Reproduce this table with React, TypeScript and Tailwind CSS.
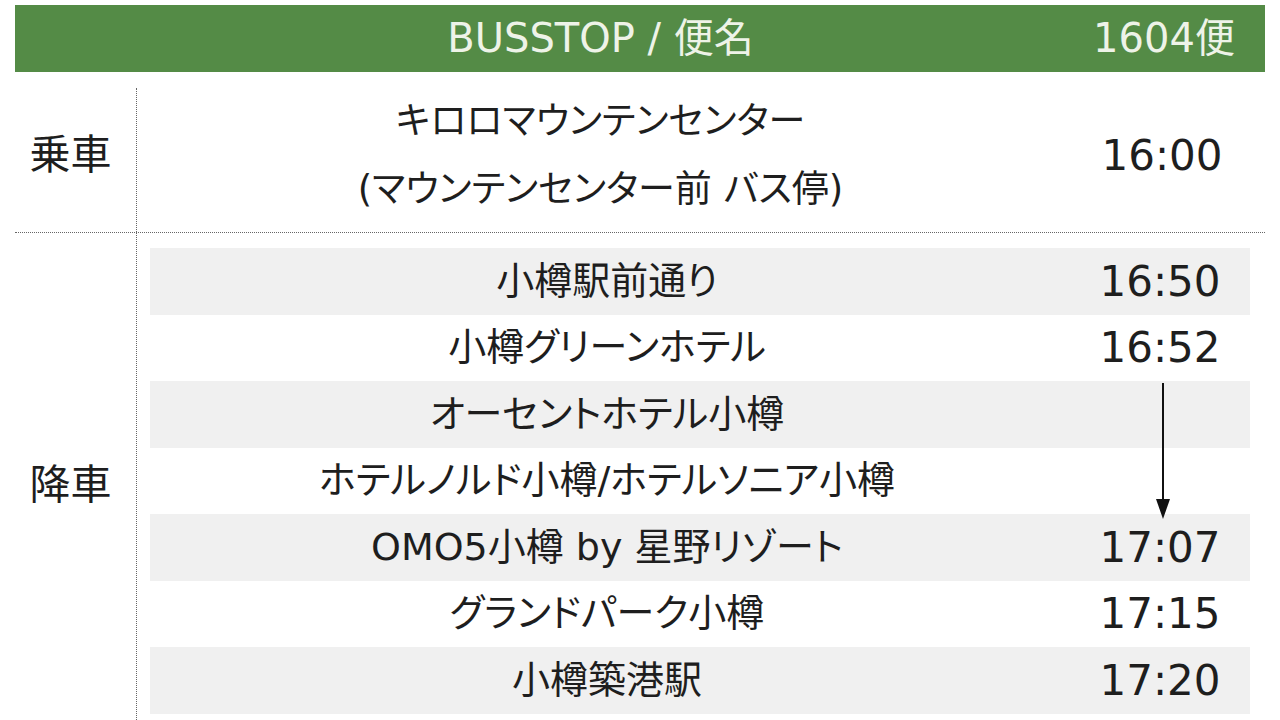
const font = "font-['DejaVu_Sans','Noto_Sans_CJK_JP',sans-serif]";

const dropoffs = [
  { name: '小樽駅前通り', time: '16:50' },
  { name: '小樽グリーンホテル', time: '16:52' },
  { name: 'オーセントホテル小樽', time: '' },
  { name: 'ホテルノルド小樽/ホテルソニア小樽', time: '' },
  { name: 'OMO5小樽 by 星野リゾート', time: '17:07' },
  { name: 'グランドパーク小樽', time: '17:15' },
  { name: '小樽築港駅', time: '17:20' },
];

const App = () => {
  return (
    <div className={`w-[1280px] h-[720px] overflow-hidden bg-white text-[#1e1e1e] ${font}`}>
      {/* Header */}
      <div className="mx-[15px] mt-[5px] h-[67px] bg-[#548b46] text-[#eef3e8] text-[40px] grid grid-cols-[122px_927px_186px] items-center">
        <div />
        <div className="text-center pb-[2px]">BUSSTOP / 便名</div>
        <div className="text-center pl-[14px] pb-[2px]">1604便</div>
      </div>

      {/* Boarding */}
      <div className="mx-[15px] mt-[16px] grid grid-cols-[122px_927px_186px] h-[144px]">
        <div className="border-r border-dotted border-[#666] flex items-center justify-center text-[41px] pr-[10px] pb-[10px]">
          乗車
        </div>
        <div className="flex flex-col items-center justify-center text-[37px] leading-[68px] pb-[10px] [font-feature-settings:'palt']">
          <div>キロロマウンテンセンター</div>
          <div>(マウンテンセンター前 バス停)</div>
        </div>
        <div className="flex items-center justify-center text-[42px] pb-[12px] pl-[10px]">16:00</div>
      </div>

      <div className="mx-[15px] border-t border-dotted border-[#666]" />

      {/* Alighting */}
      <div className="mx-[15px] grid grid-cols-[122px_1113px]">
        <div className="border-r border-dotted border-[#666] flex items-center justify-center text-[41px] pr-[10px] pt-[4px]">
          降車
        </div>
        <div className="pl-[13px] pt-[15px] pb-[20px] relative">
          {dropoffs.map((d, i) => (
            <div
              key={d.name}
              className={`h-[66.5px] grid grid-cols-[914px_186px] items-center ${i % 2 === 0 ? 'bg-[#f0f0f0]' : 'bg-white'}`}
            >
              <div className="text-center text-[38px] [font-feature-settings:'palt']">{d.name}</div>
              <div className="text-center text-[42px] pl-[6px]">{d.time}</div>
            </div>
          ))}
          {/* arrow from 16:52 down to 17:07 */}
          <svg
            className="absolute left-[1018px] top-[150px]"
            width="16"
            height="136"
            viewBox="0 0 16 136"
          >
            <line x1="8" y1="0" x2="8" y2="120" stroke="#111" strokeWidth="2" />
            <polygon points="1,116 15,116 8,136" fill="#111" />
          </svg>
        </div>
      </div>
    </div>
  );
};

export default App;
